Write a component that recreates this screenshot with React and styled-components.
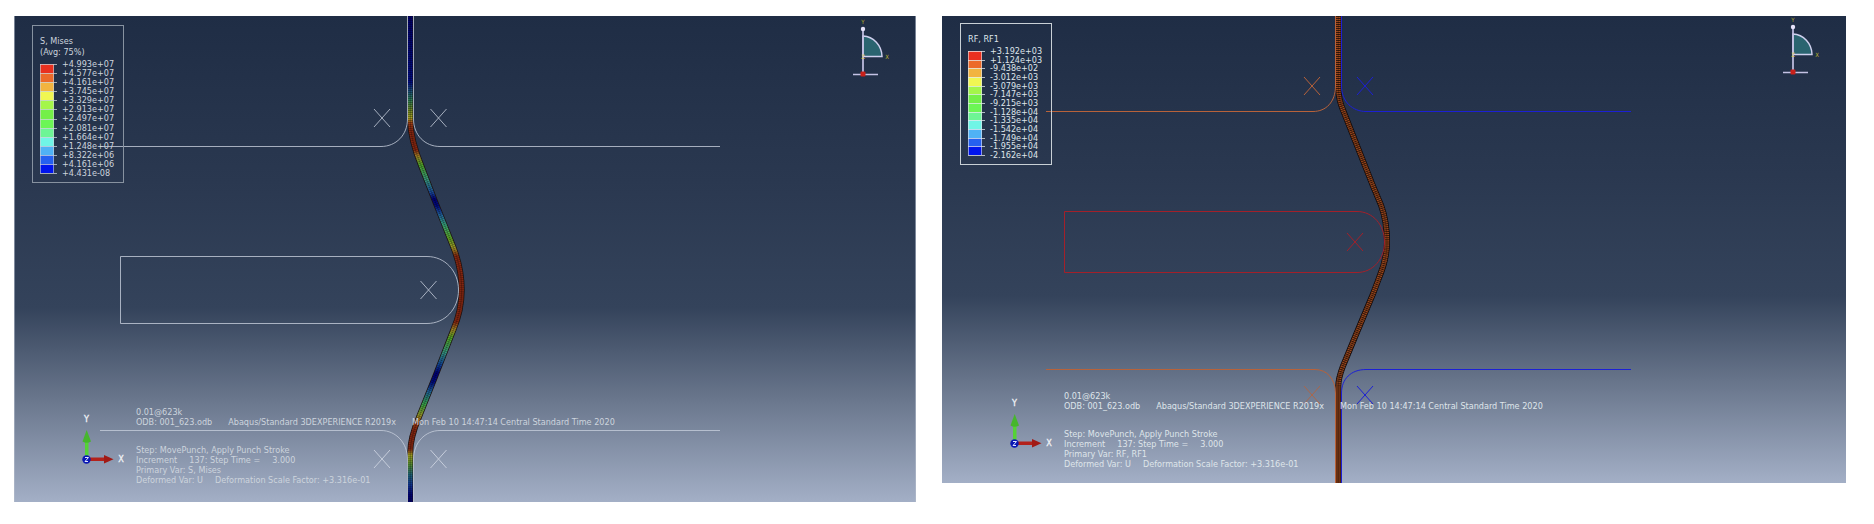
import React from "react";
import styled, { createGlobalStyle } from "styled-components";

const GlobalStyle = createGlobalStyle`
  body {
    margin: 0;
    background: #fff;
    font-family: "DejaVu Sans Condensed", "DejaVu Sans", sans-serif;
    font-size: 9px;
  }
`;

const Page = styled.main`
  display: flex;
  align-items: flex-start;
  gap: 26px;
  padding: 16px 28px 0 14px;
`;

const Viewport = styled.section`
  position: relative;
  flex: ${(p) => p.$width} 1 0;
  min-width: 0;
  aspect-ratio: ${(p) => p.$width} / ${(p) => p.$height};
  box-sizing: border-box;
  display: flex;
  flex-direction: column;
  justify-content: space-between;
  overflow: hidden;
  color: ${(p) => p.$ink};
  background: linear-gradient(#1f2d45 0%, #2a3850 34%, #34435b 60%, #67748a 78%, #a3afc6 100%);
`;

const Scene = styled.svg`
  position: absolute;
  inset: 0;
  width: 100%;
  height: 100%;
  fill: none;
`;

const Compass = styled.svg`
  position: absolute;
  top: ${(p) => p.$top}px;
  right: 24px;
`;

const Legend = styled.aside`
  position: relative;
  align-self: flex-start;
  box-sizing: border-box;
  width: 92px;
  margin: ${(p) => p.$top}px 0 0 18px;
  padding: 10px 0 5px 7px;
  border: 1px solid ${(p) => p.$line};
`;

const LegendTitle = styled.div`
  line-height: 11px;
  white-space: nowrap;
`;

const Scale = styled.div`
  display: flex;
  gap: 5px;
  height: ${(p) => p.$height}px;
  margin-top: 2px;
`;

const Bar = styled.svg`
  display: block;
  width: 17px;
  height: 100%;
`;

const Values = styled.ul`
  display: flex;
  flex-direction: column;
  justify-content: space-between;
  margin: 0;
  padding: 0;
  list-style: none;
  line-height: 8px;
`;

const Footer = styled.footer`
  position: relative;
  display: flex;
  align-items: flex-start;
  padding: 0 0 ${(p) => p.$bottom}px 64px;
`;

const Info = styled.div`
  line-height: 10px;
  white-space: nowrap;
`;

const InfoBlock = styled.div`
  & + & {
    margin-top: ${(p) => p.$gap}px;
  }
`;

const InfoLine = styled.div`
  display: flex;
  gap: ${(p) => p.$gap || 12}px;
`;

const BANDS = [
  "#e9301f", "#ec6a2a", "#f2b440", "#f0f752", "#a4f64a", "#74f048",
  "#6cf655", "#6df595", "#70f5e6", "#50b2f5", "#2560f0", "#0014ec",
];

function ColorScale({ height, values, line }) {
  const inner = height - 8;
  const y = (i) => 4 + Math.round((inner * i) / BANDS.length);
  return (
    <Scale $height={height}>
      <Bar aria-hidden="true">
        {BANDS.map((c, i) => (
          <rect key={c} x="0" y={y(i)} width="14" height={y(i + 1) - y(i)} fill={c} />
        ))}
        <path d={`M0.5 4V${height - 4}M13.5 4V${height - 4}`} stroke={line} strokeOpacity="0.6" />
        {values.map((v, i) => (
          <path key={v} d={`M0 ${y(i) + 0.5}H17`} stroke={line} strokeOpacity="0.75" />
        ))}
      </Bar>
      <Values>
        {values.map((v) => (
          <li key={v}>{v}</li>
        ))}
      </Values>
    </Scale>
  );
}

function ViewCompass({ top }) {
  return (
    <Compass $top={top} width="44" height="66" viewBox="0 0 44 66" aria-hidden="true">
      <path d="M15 18A20 21 0 0 1 34 38.500H15Z" fill="#2a6470" stroke="#cfd0ee" strokeWidth="1.500" />
      <path d="M15 11V56M5 56.500H30" fill="none" stroke="#c4c2e4" strokeWidth="1.700" />
      <circle cx="15" cy="11" r="2.200" fill="#e6e2fa" />
      <rect x="12.500" y="53.500" width="5" height="5" rx="1" fill="#c8201a" />
      <g fill="#b9b02c" fontSize="6" textAnchor="middle">
        <text x="15" y="6">Y</text>
        <text x="39" y="41">X</text>
        <text x="15" y="41" fill="#e0d040">Z</text>
      </g>
    </Compass>
  );
}

function Triad() {
  return (
    <svg width="58" height="62" viewBox="0 0 58 62" aria-hidden="true">
      <path d="M7 34H10.500V50H7Z" fill="#55d236" />
      <path d="M8.700 23L13 34.500Q8.700 37 4.500 34.500Z" fill="#46b62c" />
      <path d="M12 50.500H27V54H12Z" fill="#b3221b" />
      <path d="M26 48L35.500 52.200L26 56.500Z" fill="#a11a15" />
      <circle cx="8.500" cy="52.500" r="4.200" fill="#0a18b4" />
      <path d="M7 50.500H10.500L7 54.500H10" fill="none" stroke="#dfe4ff" />
      <g fill="#f0f2f6" fontSize="9" textAnchor="middle" stroke="#f0f2f6" strokeWidth="0.300">
        <text x="8.500" y="15">Y</text>
        <text x="43" y="55">X</text>
      </g>
    </svg>
  );
}

const Cross = ({ x, y, color, opacity = 1 }) => (
  <path
    d={`M${x - 8} ${y - 9}L${x + 8} ${y + 9}M${x - 8} ${y + 9}L${x + 8} ${y - 9}`}
    stroke={color}
    opacity={opacity}
  />
);

const Mesh = ({ d, paint, edge, dash, shade }) => (
  <g>
    <path d={d} stroke={edge} strokeWidth="6" />
    <path d={d} stroke={paint} strokeWidth="4.500" />
    <path d={d} stroke="#000" strokeOpacity={shade} strokeWidth="5" strokeDasharray={dash} />
    <path d={d} stroke="#000" strokeOpacity="0.25" strokeWidth="1" />
  </g>
);

const STRESS = [
  [0, "#00006e"], [66, "#000c86"], [74, "#1a4a80"], [84, "#2f8058"], [94, "#6f8a28"],
  [102, "#a8a424"], [107, "#a04016"], [114, "#8a2812"], [134, "#8a2812"], [140, "#a88428"],
  [149, "#50ac2c"], [164, "#3a9c82"], [176, "#1c50a0"], [183, "#00007a"], [190, "#000c86"],
  [199, "#2468a4"], [210, "#3cac78"], [222, "#60ac28"], [232, "#a89c28"], [240, "#8a2812"],
  [306, "#8a2812"], [314, "#a89028"], [322, "#54ac28"], [336, "#3a9c82"], [348, "#124a9c"],
  [357, "#00007a"], [366, "#000c86"], [376, "#20689c"], [389, "#3cac48"], [399, "#989c28"],
  [407, "#a04016"], [414, "#8a2812"], [433, "#8a2812"], [439, "#a8a824"], [449, "#569438"],
  [459, "#206880"], [469, "#12389c"], [479, "#00007a"], [486, "#00006e"],
];

const STRESS_STRIP =
  "M396.300 0V105C396.500 122 402 137 407.700 151L421.300 186L439.300 231C444 243 447.700 258 447.700 274C447.700 290 444 303 439.300 314L421 361L405 401C400 413 396.300 425 396.300 436V486";

const FORCE_STRIP =
  "M396.300 0V72C396.500 80 398 87 401 94L414 127L431 170L439 189C443 200 445 212 445 226C445 240 442 250 437 262L431 278L413 321L401 350C398 358 396.300 364 396.300 370V467";

function StressScene() {
  const c = "#c6cddb";
  return (
    <Scene viewBox="0 0 902 486" aria-hidden="true">
      <defs>
        <linearGradient id="stress" gradientUnits="userSpaceOnUse" x1="0" y1="0" x2="0" y2="486">
          {STRESS.map(([y, color]) => (
            <stop key={y} offset={y / 486} stopColor={color} />
          ))}
        </linearGradient>
      </defs>
      <Mesh d={STRESS_STRIP} paint="url(#stress)" edge="#1c1210" dash="1 1" shade={0.3} />
      <g stroke={c} strokeOpacity="0.8">
        <path d="M86 130.500H367C382 130.500 393.500 119 393.500 103V0" />
        <path d="M706 130.500H426C411 130.500 399.500 119 399.500 103V0" />
        <path d="M86 414.500H367C382 414.500 393.500 427 393.500 443V486" />
        <path d="M706 414.500H426C411 414.500 399.500 427 399.500 443V486" />
        <path d="M106.500 240.500H413C431 240.500 444.500 255 444.500 274C444.500 293 431 307.500 413 307.500H106.500Z" />
      </g>
      <Cross x={368} y={102} color={c} opacity={0.8} />
      <Cross x={424.5} y={102} color={c} opacity={0.8} />
      <Cross x={414.5} y={274} color={c} opacity={0.8} />
      <Cross x={368} y={443} color={c} />
      <Cross x={424.5} y={443} color={c} />
      <path d="M0.500 0V486M901.500 0V486" stroke="#b4bccb" strokeOpacity="0.6" />
    </Scene>
  );
}

function ForceScene() {
  return (
    <Scene viewBox="0 0 904 467" aria-hidden="true">
      <Mesh d={FORCE_STRIP} paint="#a24a1e" edge="#120a0a" dash="1 1" shade={0.65} />
      <g stroke="#b8623a">
        <path d="M104 95.500H371C384 95.500 393.500 86 393.500 70V0" />
        <path d="M104 353.500H373C385 353.500 393.500 363 393.500 377V467" />
      </g>
      <g stroke="#1c20d4">
        <path d="M689 95.500H424C411 95.500 399.500 86 399.500 70V0" />
        <path d="M689 353.500H424C409 353.500 399.500 363 399.500 377V467" />
      </g>
      <path
        d="M122.500 195.500H415C431 195.500 442.500 209 442.500 226C442.500 243 431 256.500 415 256.500H122.500Z"
        stroke="#a3202a"
      />
      <Cross x={370} y={70} color="#b8623a" />
      <Cross x={423} y={70} color="#1c20d4" />
      <Cross x={413} y={226} color="#a3202a" />
      <Cross x={370} y={379} color="#b8623a" opacity={0.8} />
      <Cross x={423} y={379} color="#1c20d4" />
    </Scene>
  );
}

function StateInfo({ variable, bottom, gap }) {
  return (
    <Footer $bottom={bottom}>
      <Triad />
      <Info>
        <InfoBlock $gap={gap}>
          <InfoLine>0.01@623k</InfoLine>
          <InfoLine $gap={16}>
            <span>ODB: 001_623.odb</span>
            <span>Abaqus/Standard 3DEXPERIENCE R2019x</span>
            <span>Mon Feb 10 14:47:14 Central Standard Time 2020</span>
          </InfoLine>
        </InfoBlock>
        <InfoBlock $gap={gap}>
          <InfoLine>Step: MovePunch, Apply Punch Stroke</InfoLine>
          <InfoLine>
            <span>Increment</span>
            <span>137: Step Time =</span>
            <span>3.000</span>
          </InfoLine>
          <InfoLine>Primary Var: {variable}</InfoLine>
          <InfoLine>
            <span>Deformed Var: U</span>
            <span>Deformation Scale Factor: +3.316e-01</span>
          </InfoLine>
        </InfoBlock>
      </Info>
    </Footer>
  );
}

const STRESS_VALUES = [
  "+4.993e+07", "+4.577e+07", "+4.161e+07", "+3.745e+07", "+3.329e+07", "+2.913e+07", "+2.497e+07",
  "+2.081e+07", "+1.664e+07", "+1.248e+07", "+8.322e+06", "+4.161e+06", "+4.431e-08",
];

const FORCE_VALUES = [
  "+3.192e+03", "+1.124e+03", "-9.438e+02", "-3.012e+03", "-5.079e+03", "-7.147e+03", "-9.215e+03",
  "-1.128e+04", "-1.335e+04", "-1.542e+04", "-1.749e+04", "-1.955e+04", "-2.162e+04",
];

export default function App() {
  return (
    <>
      <GlobalStyle />
      <Page>
        <Viewport $width={902} $height={486} $ink="#cdd4dd">
          <StressScene />
          <ViewCompass top={2} />
          <Legend $top={9} $line="#8792a0">
            <LegendTitle>S, Mises</LegendTitle>
            <LegendTitle>(Avg: 75%)</LegendTitle>
            <ColorScale height={117} values={STRESS_VALUES} line="#cdd3da" />
          </Legend>
          <StateInfo variable="S, Mises" bottom={17} gap={19} />
        </Viewport>
        <Viewport $width={904} $height={467} $ink="#dfe5ea">
          <ForceScene />
          <ViewCompass top={0} />
          <Legend $top={7} $line="#c9d0d6">
            <LegendTitle>RF, RF1</LegendTitle>
            <ColorScale height={112} values={FORCE_VALUES} line="#e6eaee" />
          </Legend>
          <StateInfo variable="RF, RF1" bottom={14} gap={18} />
        </Viewport>
      </Page>
    </>
  );
}
